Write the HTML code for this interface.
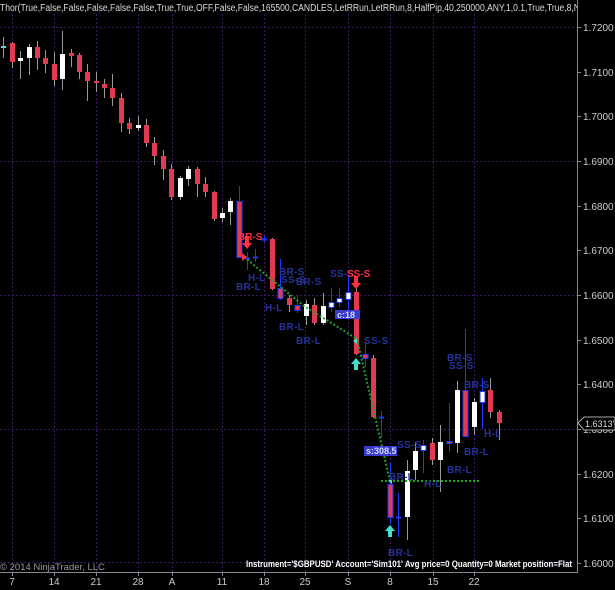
<!DOCTYPE html>
<html><head><meta charset="utf-8"><style>
html,body{margin:0;padding:0;background:#000;width:615px;height:590px;overflow:hidden}
svg{display:block}
text{font-family:"Liberation Sans",sans-serif}
</style></head><body>
<svg width="615" height="590" viewBox="0 0 615 590" xmlns="http://www.w3.org/2000/svg">
<rect width="615" height="590" fill="#000"/>
<g stroke="#3c1a66" stroke-width="1" stroke-dasharray="2,2">
<line x1="0" y1="27.5" x2="577" y2="27.5"/>
<line x1="0" y1="161.5" x2="577" y2="161.5"/>
<line x1="0" y1="295.5" x2="577" y2="295.5"/>
<line x1="0" y1="429.5" x2="577" y2="429.5"/>
<line x1="0" y1="562.5" x2="577" y2="562.5"/>
<line x1="12.5" y1="14" x2="12.5" y2="572"/>
<line x1="54.5" y1="14" x2="54.5" y2="572"/>
<line x1="96.5" y1="14" x2="96.5" y2="572"/>
<line x1="138.5" y1="14" x2="138.5" y2="572"/>
<line x1="172.5" y1="14" x2="172.5" y2="572"/>
<line x1="222.5" y1="14" x2="222.5" y2="572"/>
<line x1="264.5" y1="14" x2="264.5" y2="572"/>
<line x1="305.5" y1="14" x2="305.5" y2="572"/>
<line x1="348.5" y1="14" x2="348.5" y2="572"/>
<line x1="390.5" y1="14" x2="390.5" y2="572"/>
<line x1="433.5" y1="14" x2="433.5" y2="572"/>
<line x1="474.5" y1="14" x2="474.5" y2="572"/>
</g>
<g stroke="#888" stroke-width="1">
<line x1="577.5" y1="0" x2="577.5" y2="572"/>
<line x1="0" y1="572.5" x2="578" y2="572.5"/>
<line x1="577" y1="27.5" x2="581" y2="27.5"/><line x1="577" y1="72.5" x2="581" y2="72.5"/><line x1="577" y1="116.5" x2="581" y2="116.5"/><line x1="577" y1="161.5" x2="581" y2="161.5"/><line x1="577" y1="206.5" x2="581" y2="206.5"/><line x1="577" y1="250.5" x2="581" y2="250.5"/><line x1="577" y1="295.5" x2="581" y2="295.5"/><line x1="577" y1="340.5" x2="581" y2="340.5"/><line x1="577" y1="384.5" x2="581" y2="384.5"/><line x1="577" y1="429.5" x2="581" y2="429.5"/><line x1="577" y1="474.5" x2="581" y2="474.5"/><line x1="577" y1="518.5" x2="581" y2="518.5"/><line x1="577" y1="563.5" x2="581" y2="563.5"/>
<line x1="12.5" y1="572" x2="12.5" y2="576"/><line x1="54.5" y1="572" x2="54.5" y2="576"/><line x1="96.5" y1="572" x2="96.5" y2="576"/><line x1="138.5" y1="572" x2="138.5" y2="576"/><line x1="172.5" y1="572" x2="172.5" y2="576"/><line x1="222.5" y1="572" x2="222.5" y2="576"/><line x1="264.5" y1="572" x2="264.5" y2="576"/><line x1="305.5" y1="572" x2="305.5" y2="576"/><line x1="348.5" y1="572" x2="348.5" y2="576"/><line x1="390.5" y1="572" x2="390.5" y2="576"/><line x1="433.5" y1="572" x2="433.5" y2="576"/><line x1="474.5" y1="572" x2="474.5" y2="576"/>
</g>
<g fill="#ccc" font-size="10">
<text x="583" y="31">1.7200</text><text x="583" y="76">1.7100</text><text x="583" y="120">1.7000</text><text x="583" y="165">1.6900</text><text x="583" y="210">1.6800</text><text x="583" y="254">1.6700</text><text x="583" y="299">1.6600</text><text x="583" y="344">1.6500</text><text x="583" y="388">1.6400</text><text x="583" y="433">1.6300</text><text x="583" y="478">1.6200</text><text x="583" y="522">1.6100</text><text x="583" y="567">1.6000</text>
</g>
<g fill="#ccc" font-size="10" text-anchor="middle">
<text x="12" y="585">7</text><text x="54" y="585">14</text><text x="96" y="585">21</text><text x="138" y="585">28</text><text x="172" y="585">A</text><text x="222" y="585">11</text><text x="264" y="585">18</text><text x="305" y="585">25</text><text x="348" y="585">S</text><text x="390" y="585">8</text><text x="433" y="585">15</text><text x="474" y="585">22</text>
</g>
<text x="0" y="11" fill="#ddd" font-size="10" textLength="580" lengthAdjust="spacingAndGlyphs">Thor(True,False,False,False,False,False,True,True,OFF,False,False,165500,CANDLES,LetRRun,LetRRun,8,HalfPip,40,250000,ANY,1,0.1,True,True,8,N</text>
<rect x="577" y="0" width="38" height="14" fill="#000"/>
<line x1="577.5" y1="0" x2="577.5" y2="14" stroke="#888"/>
<g id="c">
<g stroke="#999" stroke-width="1">
<line x1="3.5" y1="37" x2="3.5" y2="58"/><line x1="12.5" y1="42" x2="12.5" y2="68"/><line x1="20.5" y1="51" x2="20.5" y2="79"/><line x1="29.5" y1="44" x2="29.5" y2="75"/><line x1="37.5" y1="41" x2="37.5" y2="70"/><line x1="45.5" y1="50" x2="45.5" y2="73"/><line x1="54.5" y1="52" x2="54.5" y2="86"/><line x1="62.5" y1="31" x2="62.5" y2="90"/><line x1="71.5" y1="49" x2="71.5" y2="67"/><line x1="79.5" y1="53" x2="79.5" y2="79"/><line x1="87.5" y1="64" x2="87.5" y2="101"/><line x1="96.5" y1="72" x2="96.5" y2="92"/><line x1="104.5" y1="79" x2="104.5" y2="98"/><line x1="112.5" y1="74" x2="112.5" y2="106"/><line x1="121.5" y1="93" x2="121.5" y2="132"/><line x1="129.5" y1="118" x2="129.5" y2="134"/><line x1="138.5" y1="116" x2="138.5" y2="131"/><line x1="146.5" y1="119" x2="146.5" y2="147"/><line x1="154.5" y1="137" x2="154.5" y2="165"/><line x1="163.5" y1="150" x2="163.5" y2="180"/><line x1="171.5" y1="164" x2="171.5" y2="200"/><line x1="180.5" y1="176" x2="180.5" y2="200"/><line x1="188.5" y1="166" x2="188.5" y2="186"/><line x1="197.5" y1="167" x2="197.5" y2="197"/><line x1="205.5" y1="177" x2="205.5" y2="197"/><line x1="214.5" y1="191" x2="214.5" y2="221"/><line x1="222.5" y1="208" x2="222.5" y2="222"/><line x1="230.5" y1="198" x2="230.5" y2="225"/>
<line x1="272.5" y1="238" x2="272.5" y2="290"/><line x1="289.5" y1="295" x2="289.5" y2="312"/><line x1="306.5" y1="300" x2="306.5" y2="325"/><line x1="314.5" y1="298" x2="314.5" y2="325"/><line x1="323.5" y1="293" x2="323.5" y2="325"/><line x1="356.5" y1="288" x2="356.5" y2="355"/><line x1="373.5" y1="355" x2="373.5" y2="418"/><line x1="407.5" y1="460" x2="407.5" y2="540"/><line x1="415.5" y1="442" x2="415.5" y2="480"/><line x1="432.5" y1="438" x2="432.5" y2="465"/><line x1="440.5" y1="425" x2="440.5" y2="492"/><line x1="457.5" y1="381" x2="457.5" y2="453"/><line x1="474.5" y1="398" x2="474.5" y2="435"/><line x1="490.5" y1="378" x2="490.5" y2="418"/><line x1="499.5" y1="410" x2="499.5" y2="440"/>
</g>
<g stroke="#1a3aff" stroke-width="1">
<line x1="239.5" y1="186" x2="239.5" y2="258"/><line x1="247.5" y1="252" x2="247.5" y2="270"/><line x1="255.5" y1="249" x2="255.5" y2="262"/><line x1="264.5" y1="236" x2="264.5" y2="242"/><line x1="280.5" y1="259" x2="280.5" y2="300"/><line x1="297.5" y1="295" x2="297.5" y2="313"/><line x1="331.5" y1="288" x2="331.5" y2="312"/><line x1="339.5" y1="288" x2="339.5" y2="307"/><line x1="348.5" y1="276" x2="348.5" y2="310"/><line x1="365.5" y1="343" x2="365.5" y2="367"/><line x1="381.5" y1="411" x2="381.5" y2="438"/><line x1="390.5" y1="463" x2="390.5" y2="524"/><line x1="398.5" y1="493" x2="398.5" y2="537"/><line x1="423.5" y1="440" x2="423.5" y2="473"/><line x1="449.5" y1="403" x2="449.5" y2="452"/><line x1="465.5" y1="329" x2="465.5" y2="437"/><line x1="482.5" y1="378" x2="482.5" y2="429"/>
<line x1="245" y1="258.5" x2="250" y2="258.5" stroke-width="2"/><line x1="253" y1="257.5" x2="258" y2="257.5" stroke-width="2"/><line x1="261" y1="239.5" x2="267" y2="239.5" stroke-width="2"/><line x1="379" y1="417.5" x2="384" y2="417.5" stroke-width="2"/><line x1="396" y1="517.5" x2="401" y2="517.5" stroke-width="2"/>
</g>
<g fill="#e23a52">
<rect x="10" y="43" width="5" height="19"/><rect x="35" y="47" width="5" height="11"/><rect x="43" y="58" width="5" height="6"/><rect x="52" y="64" width="5" height="16"/><rect x="69" y="53" width="5" height="3"/><rect x="77" y="55" width="5" height="17"/><rect x="85" y="72" width="5" height="9"/><rect x="94" y="81" width="5" height="2"/><rect x="102" y="84" width="5" height="4"/><rect x="110" y="88" width="5" height="10"/><rect x="119" y="98" width="5" height="25"/><rect x="127" y="123" width="5" height="6"/><rect x="144" y="125" width="5" height="18"/><rect x="152" y="143" width="5" height="13"/><rect x="161" y="156" width="5" height="13"/><rect x="169" y="169" width="5" height="28"/><rect x="195" y="169" width="5" height="15"/><rect x="203" y="184" width="5" height="8"/><rect x="212" y="192" width="5" height="27"/><rect x="270" y="239" width="5" height="50"/><rect x="287" y="298" width="5" height="7"/><rect x="312" y="305" width="5" height="18"/><rect x="354" y="292" width="5" height="62"/><rect x="371" y="358" width="5" height="59"/><rect x="430" y="443" width="5" height="17"/><rect x="488" y="390" width="5" height="22"/><rect x="497" y="412" width="5" height="11"/>
</g>
<g fill="#e23a52" stroke="#1a3aff" stroke-width="1">
<rect x="237" y="201.5" width="5" height="56"/><rect x="278" y="288.5" width="5" height="10"/><rect x="295" y="305.5" width="5" height="5"/><rect x="363" y="354.5" width="5" height="4"/><rect x="388" y="484.5" width="5" height="33"/><rect x="447" y="441.5" width="5" height="2"/><rect x="463" y="390.5" width="5" height="46"/>
</g>
<g fill="#fff">
<rect x="18" y="58" width="5" height="3"/><rect x="27" y="47" width="5" height="11"/><rect x="60" y="54" width="5" height="25"/><rect x="136" y="125" width="5" height="3"/><rect x="178" y="178" width="5" height="19"/><rect x="186" y="169" width="5" height="10"/><rect x="220" y="213" width="5" height="5"/><rect x="228" y="201" width="5" height="11"/><rect x="304" y="304" width="5" height="12"/><rect x="321" y="306" width="5" height="17"/><rect x="405" y="471" width="5" height="46"/><rect x="413" y="451" width="5" height="19"/><rect x="438" y="442" width="5" height="18"/><rect x="455" y="390" width="5" height="53"/><rect x="472" y="402" width="5" height="25"/>
</g>
<g fill="#fff" stroke="#1a3aff" stroke-width="1">
<rect x="329" y="302.5" width="5" height="5"/><rect x="337" y="298.5" width="5" height="4"/><rect x="346" y="292.5" width="5" height="7"/><rect x="421" y="445.5" width="5" height="5"/><rect x="480" y="391.5" width="5" height="11"/>
</g>
<rect x="1" y="46" width="5" height="2" fill="#6cc"/>
</g>
<g stroke="#1fa31f" stroke-width="2" stroke-dasharray="2,2" fill="none">
<polyline points="244,257 304,306 357,339 390,481"/>
<line x1="381" y1="481" x2="481" y2="481"/>
</g>
<g fill="#ff3040">
<path d="M245,236h4v7h3l-5,6l-5,-6h3z"/>
<path d="M354,276h4v7h3l-5,6l-5,-6h3z"/>
<path d="M242,253l5,4l-5,4z"/>
</g>
<g fill="#40e0d0">
<path d="M354,370h4v-6h3l-5,-6l-5,6h3z"/>
<path d="M388,537h4v-6h3l-5,-6l-5,6h3z"/>
<path d="M357,338l-4,3l4,3z"/><path d="M392,478l-4,3l4,3z"/>
</g>
<g font-size="10" fill="#25339a" font-weight="bold" letter-spacing="0.3">
<text x="236" y="290">BR-L</text><text x="248" y="281">H-L</text>
<text x="279" y="275">BR-S</text><text x="281" y="283">SS-S</text><text x="296" y="285">BR-S</text>
<text x="265" y="311">H-L</text><text x="279" y="330">BR-L</text><text x="296" y="344">BR-L</text>
<text x="330" y="277">SS-S</text><text x="364" y="344">SS-S</text>
<text x="397" y="448">SS-S</text><text x="424" y="487">H-L</text><text x="389" y="480">BR-L</text>
<text x="447" y="361">BR-S</text><text x="449" y="369">SS-S</text><text x="464" y="388">BR-S</text>
<text x="484" y="437">H-L</text><text x="464" y="455">BR-L</text><text x="447" y="473">BR-L</text>
<text x="388" y="556">BR-L</text>
</g>
<g font-size="10" fill="#ff3040" font-weight="bold"><text x="238" y="240">BR-S</text><text x="347" y="277">SS-S</text></g>
<rect x="335" y="310" width="25" height="9" fill="#3a3ad0"/><text x="337" y="318" font-size="9" fill="#cde" font-weight="bold">c:18</text>
<rect x="364" y="446" width="33" height="10" fill="#3a3ad0"/><text x="366" y="454" font-size="9" fill="#cde" font-weight="bold">s:308.5</text>
<path d="M578,423l6,-6h31v13h-31z" fill="#000" stroke="#aaa"/>
<text x="585" y="427" font-size="9" fill="#ddd">1.6313'5</text>
<text x="246" y="567" font-size="9.5" fill="#fff" font-weight="bold" textLength="326" lengthAdjust="spacingAndGlyphs">Instrument='$GBPUSD' Account='Sim101' Avg price=0 Quantity=0 Market position=Flat</text>
<text x="0" y="570" font-size="9.5" fill="#999">© 2014 NinjaTrader, LLC</text>
</svg>
</body></html>
